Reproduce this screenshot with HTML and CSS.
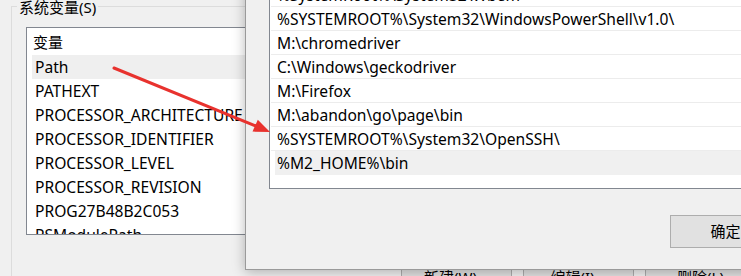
FILE: index.html
```html
<!DOCTYPE html>
<html>
	<head>
		<meta charset="utf-8">
		<title>环境变量</title>
		<link rel="stylesheet" href="styles.css">
	</head>
	<body>
		<div class="desk">
			<!-- 后面的“环境变量”窗口 -->
			<div class="win-back">
				<div class="group">
					<span class="group-title">系统变量(S)</span>
					<div class="listbox">
						<div class="list-head">变量</div>
						<div class="list-row selected">Path</div>
						<div class="list-row">PATHEXT</div>
						<div class="list-row">PROCESSOR_ARCHITECTURE</div>
						<div class="list-row">PROCESSOR_IDENTIFIER</div>
						<div class="list-row">PROCESSOR_LEVEL</div>
						<div class="list-row">PROCESSOR_REVISION</div>
						<div class="list-row">PROG27B48B2C053</div>
						<div class="list-row">PSModulePath</div>
					</div>
					<div class="btn-row">
						<button class="btn">新建(W)...</button>
						<button class="btn">编辑(I)...</button>
						<button class="btn">删除(L)</button>
					</div>
				</div>
			</div>

			<!-- 前面的“编辑环境变量”窗口 -->
			<div class="win-front">
				<div class="path-list">
					<div class="path-row">%SystemRoot%</div>
					<div class="path-row">%SystemRoot%\System32\Wbem</div>
					<div class="path-row">%SYSTEMROOT%\System32\WindowsPowerShell\v1.0\</div>
					<div class="path-row">M:\chromedriver</div>
					<div class="path-row">C:\Windows\geckodriver</div>
					<div class="path-row">M:\Firefox</div>
					<div class="path-row">M:\abandon\go\page\bin</div>
					<div class="path-row">%SYSTEMROOT%\System32\OpenSSH\</div>
					<div class="path-row selected"><span>%M2_HOME%\bin</span></div>
				</div>
				<div class="front-actions">
					<button class="btn btn-ok">确定</button>
				</div>
			</div>

			<!-- 红色箭头 -->
			<svg class="arrow" width="741" height="276" viewBox="0 0 741 276">
				<line x1="114" y1="68" x2="256" y2="126" stroke="#e8322e" stroke-width="3" stroke-linecap="round"/>
				<polygon points="270,132 252.5,131.6 257.8,119.8" fill="#e8322e"/>
			</svg>
		</div>
	</body>
</html>
```

FILE: styles.css
```css
body {
	margin: 0;
	background: #f0f0f0;
	font: 15.6px/1 "Noto Sans", "Noto Sans CJK SC", sans-serif;
	color: #000;
}

.desk {
	position: relative;
	width: 741px;
	height: 276px;
	overflow: hidden;
}

button {
	font: inherit;
	color: inherit;
}

/* 系统变量分组框 */
.group {
	width: 760px;
	margin: 6px 0 0 11px;
	border-top: 1px solid #dcdcdc;
	border-left: 1px solid #dcdcdc;
}

.group-title {
	display: block;
	width: max-content;
	margin: -8px 0 0 5px;
	padding: 0 2px;
	font-size: 15px;
	line-height: 16px;
	background: #f0f0f0;
}

.listbox {
	width: 420px;
	height: 206px;
	margin: 12px 0 0 14px;
	border: 1px solid #828790;
	background: #fff;
	overflow: hidden;
}

.list-head {
	height: 27px;
	line-height: 28px;
	padding-left: 6px;
	font-size: 15px;
}

.list-row {
	height: 24px;
	line-height: 24px;
	margin-left: 5px;
	padding-left: 3px;
	white-space: nowrap;
}

.list-row.selected {
	background: #efefef;
}

.btn-row {
	display: flex;
	gap: 11px;
	justify-content: flex-end;
	margin-top: 27px;
	padding-right: 16px;
}

.btn {
	width: 111px;
	height: 30px;
	padding: 0;
	border: 1px solid #adadad;
	background: #e1e1e1;
	font-size: 15px;
}

/* 编辑环境变量窗口 */
.win-front {
	position: absolute;
	left: 245px;
	top: -60px;
	box-sizing: border-box;
	width: 560px;
	height: 330px;
	padding: 17px 23px 21px;
	border: 1px solid #9a9a9a;
	background: #f0f0f0;
	box-shadow: 0 2px 12px rgba(0, 0, 0, 0.28);
	display: flex;
	flex-direction: column;
}

.path-list {
	box-sizing: border-box;
	height: 231px;
	border: 1px solid #828790;
	background: #fff;
	overflow: hidden;
}

.path-row {
	height: 23px;
	line-height: 24px;
	margin-left: 1px;
	padding-left: 6px;
	border-bottom: 1px solid #ececec;
	white-space: nowrap;
}

.path-row.selected {
	height: 24px;
	padding-left: 4px;
	border-bottom: 0;
}

.path-row.selected span {
	display: block;
	height: 24px;
	padding-left: 2px;
	background: #f0f0f0;
}

.front-actions {
	display: flex;
	justify-content: flex-end;
	margin-top: 26px;
}

.btn-ok {
	height: 33px;
}

.arrow {
	position: absolute;
	left: 0;
	top: 0;
}
```
